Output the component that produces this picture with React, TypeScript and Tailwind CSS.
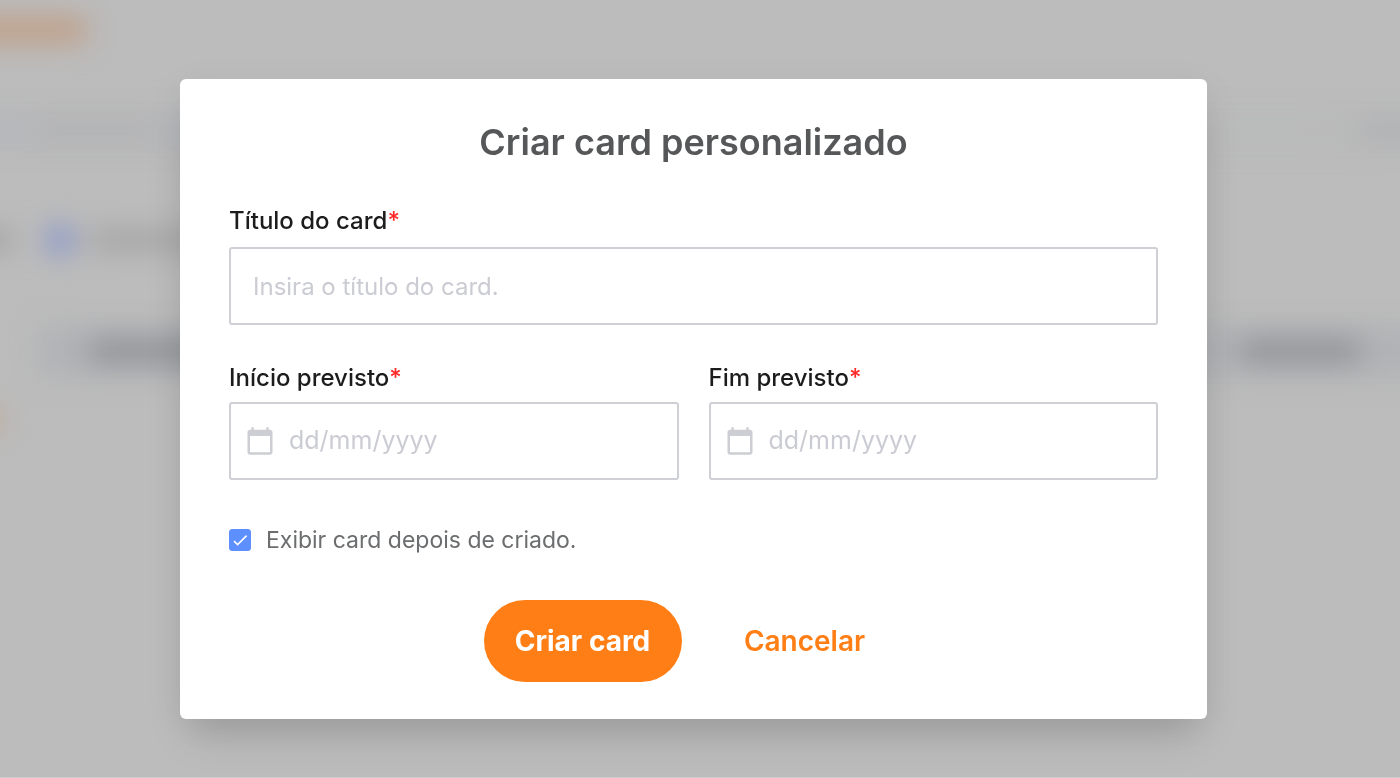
import React, { useState } from "react";

const dates = [
  { id: "start", label: "Início previsto" },
  { id: "end", label: "Fim previsto" }
];

function Label({ id, children }: { id: string; children: React.ReactNode }) {
  return (
    <label htmlFor={id} className="text-2xl leading-7 font-medium text-[#1c1c1c]">
      {children}
      <span className="text-[#ff2a2a]">*</span>
    </label>
  );
}

function CalendarIcon() {
  return (
    <svg viewBox="0 0 24 24" fill="currentColor" className="size-[30px] shrink-0 text-[#cdced4]">
      <path d="M20 3h-1V1h-2v2H7V1H5v2H4c-1.1 0-2 .9-2 2v16c0 1.1.9 2 2 2h16c1.1 0 2-.9 2-2V5c0-1.1-.9-2-2-2zm0 18H4V8h16v13z" />
    </svg>
  );
}

// Page behind the modal, out of focus
function Backdrop() {
  return (
    <div aria-hidden="true" className="fixed inset-0 overflow-hidden bg-[#bcbcbc] border-b border-[#d0d0d0]">
      <div className="-mx-10 blur-[14px]">
        <div className="pt-[18px]">
          <div className="h-6 w-[126px] bg-[#c09c82]" />
        </div>
        <div className="flex justify-between mt-[68px] h-10 items-center bg-linear-to-r from-[#b6b7ba] from-10% via-[#bababa] via-80% to-[#b8b9ba]">
          <div className="h-5 w-[110px] ml-20 bg-[#b2b2b2]" />
          <div className="h-5 w-20 bg-[#afb0b2]" />
        </div>
        <div className="flex items-center mt-[76px] h-7">
          <div className="h-5 w-[52px] bg-[#a0a0a0]" />
          <div className="size-7 ml-[34px] rounded-full bg-[#7f90cc]" />
          <div className="h-5 w-[120px] ml-4 bg-[#a2a2a2]" />
        </div>
        <div className="flex items-center justify-between mt-[72px] ml-20 h-[50px] bg-[#b0b2b5]">
          <div className="h-6 w-[130px] ml-[50px] bg-[#909297]" />
          <div className="h-6 w-[120px] mr-20 bg-[#929397]" />
        </div>
        <div className="h-5 w-10 mt-[34px] bg-[#c0a38c]" />
      </div>
    </div>
  );
}

export default function App() {
  const [show, setShow] = useState(true);

  return (
    <div className="min-h-screen font-[Inter,sans-serif]">
      <Backdrop />

      <div className="relative flex justify-center pt-[79px] pb-[58px] pl-4 pr-[29px]">
        <form
          role="dialog"
          aria-labelledby="modal-title"
          onSubmit={(e) => e.preventDefault()}
          className="w-full max-w-[1027px] rounded-md bg-white px-[49px] pt-[43px] pb-[37px] shadow-[0_24px_40px_-10px_rgba(0,0,0,0.15),0_10px_40px_rgba(0,0,0,0.06)]"
        >
          <h1 id="modal-title" className="text-center text-4xl leading-10 font-semibold text-[#555758]">
            Criar card personalizado
          </h1>

          <div className="mt-[45px] flex flex-col gap-3">
            <Label id="title">Título do card</Label>
            <input
              id="title"
              type="text"
              placeholder="Insira o título do card."
              className="h-[78px] w-full rounded-[3px] border-2 border-[#cfd0d6] px-[22px] text-2xl outline-none placeholder:text-[#cbccd3]"
            />
          </div>

          <div className="mt-[39px] grid grid-cols-2 gap-[30px]">
            {dates.map((d) => (
              <div key={d.id} className="flex flex-col gap-[10px]">
                <Label id={d.id}>{d.label}</Label>
                <div className="flex h-[78px] items-center gap-[14px] rounded-[3px] border-2 border-[#cfd0d6] px-[14px]">
                  <CalendarIcon />
                  <input
                    id={d.id}
                    type="text"
                    placeholder="dd/mm/yyyy"
                    className="w-full min-w-0 text-[25px] outline-none placeholder:text-[#cbccd3]"
                  />
                </div>
              </div>
            ))}
          </div>

          <label className="mt-11 flex w-fit items-center gap-[15px] text-[23px] leading-8 text-[#6b6d6f]">
            <span className="grid size-[22px] place-items-center">
              <input
                type="checkbox"
                checked={show}
                onChange={(e) => setShow(e.target.checked)}
                className="col-start-1 row-start-1 size-[22px] appearance-none rounded-[3px] border border-[#5e8fff] checked:bg-[#5e8fff]"
              />
              {show && (
                <svg viewBox="0 0 22 22" className="pointer-events-none col-start-1 row-start-1 size-[22px]">
                  <path d="M5 12.2 8.6 15.6 17.6 6.6" fill="none" stroke="white" strokeWidth="1.6" />
                </svg>
              )}
            </span>
            Exibir card depois de criado.
          </label>

          <div className="mt-11 flex justify-center gap-6">
            <button type="submit" className="h-[82px] w-[198px] rounded-full bg-[#ff7f16] text-[28px] font-bold text-white">
              Criar card
            </button>
            <button type="button" className="h-[82px] w-[198px] text-[28px] font-semibold text-[#ff7f16]">
              Cancelar
            </button>
          </div>
        </form>
      </div>
    </div>
  );
}
